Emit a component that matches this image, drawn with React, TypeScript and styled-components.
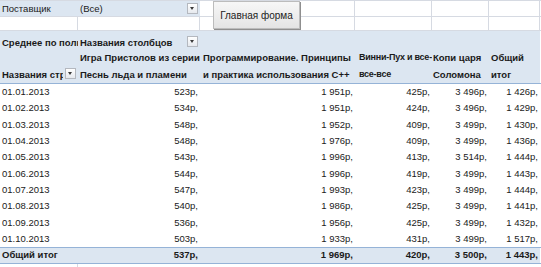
import React from 'react';
import styled, { createGlobalStyle } from 'styled-components';

const GlobalStyle = createGlobalStyle`
  html, body {
    margin: 0;
    padding: 0;
    background: #ffffff;
  }
  body {
    font-family: "Liberation Sans", Arial, sans-serif;
    font-size: 9.5px;
    color: #1a1a1a;
  }
`;

// A | B | C | D | E | F | rest
const COLS = '78px 122px 155px 77px 57px 51px 1fr';
const GRID = '#d6dae2';
const BLUE = '#dce6f1';
const BLUE_LINE = '#95b3d7';

const rows = [
  ['01.01.2013', 523, 1951, 425, 3496, 1426],
  ['01.02.2013', 534, 1951, 424, 3496, 1429],
  ['01.03.2013', 548, 1952, 409, 3499, 1430],
  ['01.04.2013', 548, 1976, 409, 3499, 1436],
  ['01.05.2013', 543, 1996, 413, 3514, 1444],
  ['01.06.2013', 544, 1996, 419, 3499, 1443],
  ['01.07.2013', 547, 1993, 423, 3499, 1444],
  ['01.08.2013', 540, 1986, 425, 3499, 1441],
  ['01.09.2013', 536, 1956, 425, 3499, 1432],
  ['01.10.2013', 503, 1933, 431, 3499, 1517],
] as const;

const total = [537, 1969, 420, 3500, 1443];

const money = (n: number) => {
  const s = String(n);
  return (s.length > 3 ? s.slice(0, -3) + '\u00a0' + s.slice(-3) : s) + 'р,';
};

function App() {
  return (
    <Sheet>
      <GlobalStyle />

      <TopRow $h={17} $top>
        <Cell $bg={BLUE}>Поставщик</Cell>
        <Cell $bg={BLUE} $between>
          <span>(Все)</span>
          <DropDown />
        </Cell>
        <Cell $line />
        <Cell $line />
        <Cell $line />
        <Cell $line />
        <Cell />
      </TopRow>
      <TopRow $h={14}>
        <Cell $line />
        <Cell $line />
        <Cell $line />
        <Cell $line />
        <Cell $line />
        <Cell $line />
        <Cell />
      </TopRow>

      <HeadRow $h={19}>
        <Cell $bold $bottom $lh={14}>Среднее по полю</Cell>
        <Cell $bold $bottom $lh={14} $between>
          <span>Названия столбцов</span>
          <DropDown $mb={3} />
        </Cell>
        <Cell />
        <Cell />
        <Cell />
        <Cell />
        <WhiteCell />
      </HeadRow>
      <HeadRow $h={34} $underline>
        <Cell $bold $bottom $lh={17} $between>
          <Clip>Названия строк</Clip>
          <DropDown $mb={4} />
        </Cell>
        <Cell $bold $bottom $lh={17}>
          <Lines>
            <span>Игра Пристолов из серии</span>
            <span>Песнь льда и пламени</span>
          </Lines>
        </Cell>
        <Cell $bold $bottom $lh={17} $pl={3}>
          <Lines>
            <span>Программирование. Принципы</span>
            <span>и практика использования С++</span>
          </Lines>
        </Cell>
        <Cell $bold $bottom $lh={17} $pl={4}>
          <Lines $tight>
            <span>Винни-Пух и все-</span>
            <span>все-все</span>
          </Lines>
        </Cell>
        <Cell $bold $bottom $lh={17} $pl={1}>
          <Lines>
            <span>Копи царя</span>
            <span>Соломона</span>
          </Lines>
        </Cell>
        <Cell $bold $bottom $lh={17}>
          <Lines>
            <span>Общий</span>
            <span>итог</span>
          </Lines>
        </Cell>
        <WhiteCell />
      </HeadRow>

      {rows.map(([date, ...vals]) => (
        <DataRow key={date}>
          <Cell>{date}</Cell>
          {vals.map((v, i) => (
            <Cell key={i} $right>
              {money(v as number)}
            </Cell>
          ))}
          <Cell />
        </DataRow>
      ))}

      <TotalRow>
        <Cell $bold>Общий итог</Cell>
        {total.map((v, i) => (
          <Cell key={i} $right $bold>
            {money(v)}
          </Cell>
        ))}
        <WhiteCell />
      </TotalRow>
      <TopRow $h={4}>
        <Cell $line />
        <Cell />
        <Cell />
        <Cell />
        <Cell />
        <Cell />
        <Cell />
      </TopRow>

      <FormButton>Главная форма</FormButton>
    </Sheet>
  );
}
export default App;

const Sheet = styled.div`
  position: relative;
  width: 541px;
  height: 267px;
  overflow: hidden;
  background: #ffffff;
`;

const RowBase = styled.div<{ $h?: number }>`
  display: grid;
  grid-template-columns: ${COLS};
  box-sizing: border-box;
  height: ${(p) => p.$h ?? 16.33}px;
`;

const TopRow = styled(RowBase)<{ $top?: boolean }>`
  border-top: ${(p) => (p.$top ? `1px solid ${GRID}` : 'none')};
  border-bottom: 1px solid ${GRID};

  &:last-of-type {
    border-bottom: none;
  }
`;

const HeadRow = styled(RowBase)<{ $underline?: boolean }>`
  background: ${BLUE};
  border-bottom: ${(p) => (p.$underline ? `1px solid ${BLUE_LINE}` : 'none')};
`;

const DataRow = styled(RowBase)`
  background: #ffffff;
`;

const TotalRow = styled(RowBase)`
  background: ${BLUE};
  border-top: 1px solid ${BLUE_LINE};
  border-bottom: 1px solid ${BLUE_LINE};
  font-weight: bold;
`;

const Cell = styled.div<{
  $bg?: string;
  $bold?: boolean;
  $right?: boolean;
  $bottom?: boolean;
  $between?: boolean;
  $line?: boolean;
  $lh?: number;
  $pl?: number;
}>`
  display: flex;
  align-items: ${(p) => (p.$bottom ? 'flex-end' : 'center')};
  justify-content: ${(p) => (p.$right ? 'flex-end' : p.$between ? 'space-between' : 'flex-start')};
  min-width: 0;
  overflow: hidden;
  white-space: nowrap;
  box-sizing: border-box;
  padding: 0 2px 0 ${(p) => p.$pl ?? 2}px;
  line-height: ${(p) => p.$lh ?? 14}px;
  font-weight: ${(p) => (p.$bold ? 'bold' : 'normal')};
  background: ${(p) => p.$bg ?? 'transparent'};
  border-right: ${(p) => (p.$line ? `1px solid ${GRID}` : 'none')};
`;

const WhiteCell = styled.div`
  background: #ffffff;
`;

const Clip = styled.span`
  overflow: hidden;
  flex: 1;
  min-width: 0;
`;

const Lines = styled.div<{ $tight?: boolean }>`
  display: flex;
  flex-direction: column;
  font-size: ${(p) => (p.$tight ? '9px' : 'inherit')};
  letter-spacing: ${(p) => (p.$tight ? '-0.25px' : 'normal')};
`;

const DropDown = styled.span<{ $mb?: number }>`
  position: relative;
  flex: none;
  width: 11px;
  height: 11px;
  margin-bottom: ${(p) => p.$mb ?? 0}px;
  margin-left: 2px;
  box-sizing: border-box;
  border: 1px solid #b4b8bf;
  background: linear-gradient(#ffffff, #e6e9ee);

  &::after {
    content: '';
    position: absolute;
    left: 2px;
    top: 3px;
    border-left: 2.5px solid transparent;
    border-right: 2.5px solid transparent;
    border-top: 3px solid #3a3a3a;
  }
`;

const FormButton = styled.div`
  position: absolute;
  left: 213px;
  top: 1px;
  width: 87px;
  height: 28px;
  box-sizing: border-box;
  display: flex;
  align-items: center;
  justify-content: center;
  font-size: 10px;
  color: #222222;
  background: linear-gradient(#f7f7f7, #e4e4e4);
  border: 1px solid #bcbcbc;
  box-shadow: 1px 1px 0 #8f8f8f;
`;
